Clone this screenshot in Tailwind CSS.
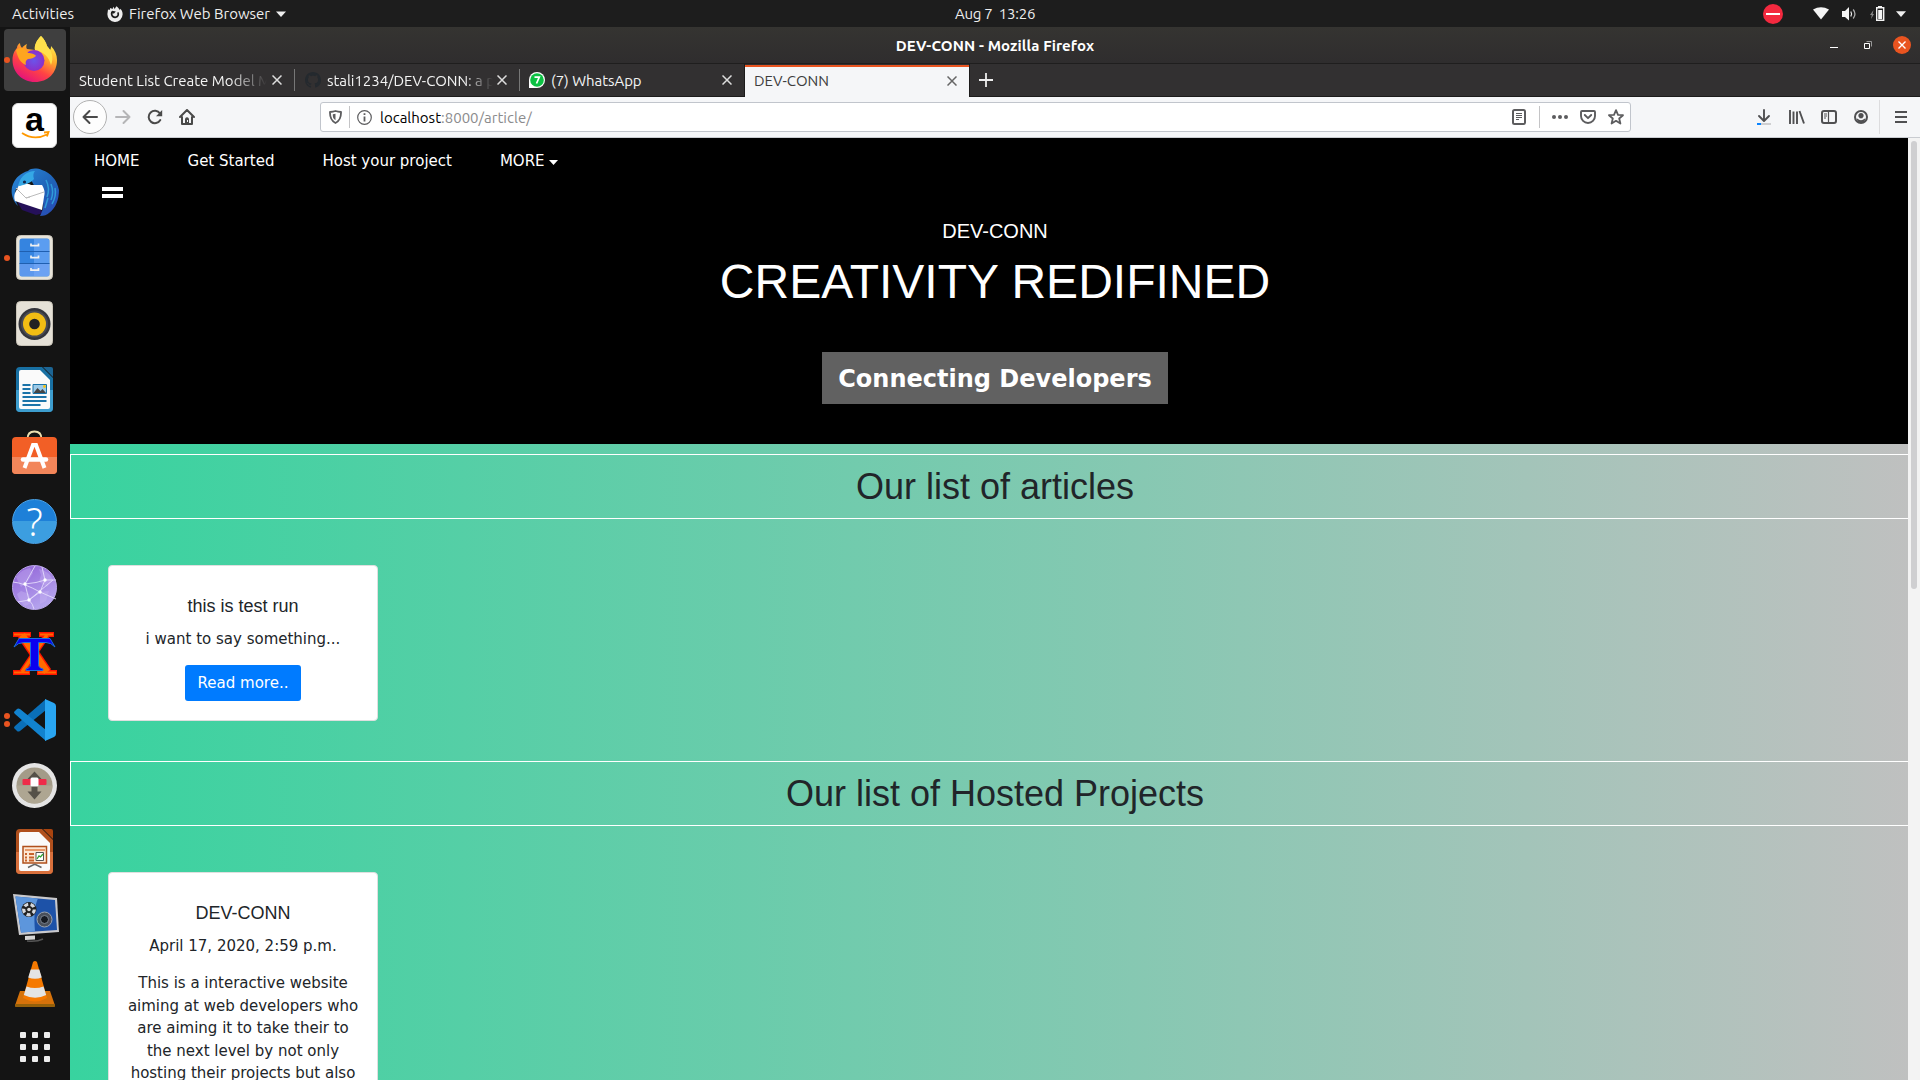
<!DOCTYPE html>
<html lang="en">
<head>
<meta charset="utf-8">
<title>DEV-CONN - Mozilla Firefox</title>
<script src="https://cdn.jsdelivr.net/npm/@tailwindcss/browser@4"></script>
</head>
<body class="w-[1920px] h-[1080px] overflow-hidden bg-[#141414] flex flex-col font-[Ubuntu,'Noto_Sans',sans-serif] text-[15px]">

<!-- System bar -->
<header class="h-[27px] shrink-0 bg-[#1d1d1d] text-[#eee] grid grid-cols-[1fr_auto_1fr] items-center leading-[27px] pl-[70px]">
  <div class="flex items-center -ml-[58px]">
    <span class="w-[62px] whitespace-nowrap tracking-[0.05px]">Activities</span>
    <svg class="ml-[33px] w-4 h-4" viewBox="0 0 16 16"><path fill="#eee" d="M8 3.2 6.2.8 5.6 3 3.3 2 2.6 4 1 3.400.4 8a7.600 7.600 0 0 0 15.200.6c.1-2.400-.8-4.800-2.400-5.800l-.3 1.500C12.300 2.800 11 1.500 9.600.3 8.600 1.400 8 2 8 3.200z"/><path fill="none" stroke="#1d1d1d" stroke-width="1.700" d="M5 5.600C3.800 9 5.500 11.400 8.200 11.300 11 11.200 12 8.600 10.800 6.300"/><path fill="#1d1d1d" d="M5 4.800l3.800.6-1.800 2-1.800.2z"/></svg>
    <span class="ml-1.5 whitespace-nowrap">Firefox Web Browser</span>
    <svg class="ml-1.5 w-[10px] h-[6px]" viewBox="0 0 10 6"><path fill="#eee" d="M0 .5h10L5 6z"/></svg>
  </div>
  <div class="whitespace-pre tracking-[-0.25px] mt-[-1px]">Aug 7  13:26</div>
  <div class="flex items-center justify-end pr-[14px]">
    <svg class="w-5 h-5 mr-[30px]" viewBox="0 0 20 20"><circle cx="10" cy="10" r="10" fill="#f3293f"/><path d="M3 10h14" stroke="#fff" stroke-width="2"/></svg>
    <svg class="w-4 h-[13px] mr-[13px]" viewBox="0 0 16 13"><path fill="#f4f4f4" d="M0 2.500Q8-2 16 2.500L8 12.500z"/></svg>
    <svg class="w-[15px] h-[14px] mr-[13px]" viewBox="0 0 15 14"><path fill="#f4f4f4" d="M0 4h3l4-4v13.500L3 10H0z"/><path fill="none" stroke="#f4f4f4" stroke-width="1.200" d="M8.800 4.500q1.600 2.500 0 5"/><path fill="none" stroke="#aaa" stroke-width="1.300" d="M11.200 2.500q3.500 4.500 0 9"/></svg>
    <svg class="w-[15px] h-[16px] mr-[11px]" viewBox="0 0 15 16"><path fill="#888" d="M3.500 4 0 9h1.800L1 13l3-5H2.600z"/><path fill="#f4f4f4" d="M8 0h4v2H8z"/><path fill="none" stroke="#f4f4f4" stroke-width="1.400" d="M6.700 1.700h7v12.600h-7z"/><path fill="#f4f4f4" d="M8.200 4h4v9h-4z"/></svg>
    <svg class="w-[10px] h-[6px]" viewBox="0 0 10 6"><path fill="#eee" d="M0 .3h10L5 6z"/></svg>
  </div>
</header>

<div class="flex grow min-h-0">

<!-- Dock -->
<aside class="w-[70px] shrink-0 bg-[#141414] flex flex-col">
  <div class="relative h-[66px] shrink-0 flex items-center justify-center">
    <div class="absolute left-1 top-[2px] w-[62px] h-[62px] rounded bg-[#3f3f3f]"></div>
    <div class="absolute left-1 top-[30px] w-1.5 h-1.5 rounded-full bg-[#e95420]"></div>
    <svg class="relative w-[46px] h-[46px] top-[-1px]" viewBox="0 0 46 46">
      <defs><linearGradient id="ff" x1=".8" y1=".1" x2=".3" y2="1"><stop offset="0" stop-color="#fff44f"/><stop offset=".35" stop-color="#ffa82b"/><stop offset=".65" stop-color="#ff4344"/><stop offset="1" stop-color="#e3107e"/></linearGradient><radialGradient id="fp"><stop offset="0" stop-color="#6a55ea"/><stop offset="1" stop-color="#8b2fc9"/></radialGradient></defs>
      <path fill="url(#ff)" d="M29 0c3 3 5 6 6 10l3 4c1-1 1-3 1-4 4 4 6 9 6 14 0 13-9 22-22 22S.5 36 .5 24C.5 18 3 14 5 12c0-2 1-4 3-5 0 2 1 4 2 5 1-2 3-3 5-4-1 2-1 4 0 5l8 1c-1-5 2-10 6-14z"/>
      <path fill="#ffe14c" d="M29 0c3 3 5 6 6 10 5 5 7 12 4 19-2-8-7-13-16-15-1-5 2-10 6-14z"/>
      <circle cx="22" cy="24.500" r="10.500" fill="url(#fp)"/>
      <path fill="#ffa51f" d="M4 14c5-4 9-2 12 3 3 0 7 1 8 3-2 2-5 3-8 3-2 1-3 3-2 6-5-2-8-6-10-15z"/>
    </svg>
  </div>
  <div class="h-[66px] shrink-0 flex items-center justify-center pb-px pr-px">
    <div class="w-[45px] h-[45px] rounded-md bg-white border border-[#ddd] relative text-center text-[34px] leading-[31px] font-bold text-black font-['Liberation_Sans',sans-serif]">a
      <svg class="absolute left-2 top-[27px] w-[29px] h-[9px]" viewBox="0 0 29 9"><path fill="none" stroke="#f90" stroke-width="1.800" d="M1 2q12 8 25 1.500M23 1.500l4.500-.5-1.500 4.500"/></svg>
    </div>
  </div>
  <div class="h-[66px] shrink-0 flex items-center justify-center">
    <svg class="w-12 h-12" viewBox="0 0 48 48">
      <defs><linearGradient id="tb" x1="0" y1="0" x2="1" y2="1"><stop offset="0" stop-color="#2b8ad9"/><stop offset=".55" stop-color="#1f63b8"/><stop offset="1" stop-color="#2a48b5"/></linearGradient></defs>
      <path fill="#251059" d="M3 28l8 14 14 5 8-2-16-14z"/>
      <path fill="url(#tb)" d="M17 3c3-3 9-3 14-1 9 3 15 10 17 20 0 9-3 18-10 23-2 2-5 3-9 3 2-4 4-8 3-14L19 10 5 21C3 26 4 32 7 38 1 32-1 23 2 16 5 9 10 5 17 3z"/>
      <path fill="#fff" d="M4 25 8 17c6-2 8-2 12 0l11 0c3 5 3 8 2 12l-2 13L4 33c-1-3-1-5 0-8z"/>
      <path fill="none" stroke="#bbb" d="M5 20l10 10 18-6M15 30l4-1"/>
      <path fill="#35a8e6" d="M8 15C10 8 16 3 24 3c-2 2-2 5-1 8-3 4-8 5-14 7-2 0-2-1-1-3z"/><circle cx="13.500" cy="14" r="1.600" fill="#14284f"/>
      <path stroke="#2f9bd8" stroke-width="1.500" fill="none" d="M35 12c3 6 3 12 1 17M40 16c2 5 2 11 0 16M44 20c1 5 0 11-3 16M37 30l-3 10"/>
    </svg>
  </div>
  <div class="relative h-[66px] shrink-0 flex items-center justify-center pb-px pr-px">
    <div class="absolute left-1 top-[30px] w-1.5 h-1.5 rounded-full bg-[#e95420]"></div>
    <svg class="w-[37px] h-[45px]" viewBox="0 0 37 45"><rect x=".5" y=".5" width="36" height="44" rx="4" fill="#e8e4da" stroke="#c9c4b8"/><rect x="3.500" y="3.500" width="30" height="38" rx="2.500" fill="#3584e0"/><path fill="#5b9df0" d="M18 4h15v37H18z"/><path fill="#78a5f5" opacity=".6" d="M4 29h29v12H4z"/><path stroke="#1f5fb0" d="M3.500 16.500h30M3.500 28.500h30"/><path stroke="#f0f0f0" stroke-width="1.700" fill="none" d="M15 8.500v2.200h7.500V8.500M15 20.500v2.200h7.500v-2.200M15 33v2.200h7.500V33"/></svg>
  </div>
  <div class="h-[66px] shrink-0 flex items-center justify-center pb-px pr-px">
    <svg class="w-[37px] h-[45px]" viewBox="0 0 37 45"><rect x=".5" y=".5" width="36" height="44" rx="4" fill="#e5e1d7" stroke="#c9c4b8"/><circle cx="18.500" cy="23" r="16" fill="#34353c"/><circle cx="18.500" cy="23" r="13.500" fill="#4a4b53"/><circle cx="18.500" cy="23" r="11.500" fill="#f2bd14"/><circle cx="18.500" cy="23" r="5.300" fill="#222"/></svg>
  </div>
  <div class="h-[66px] shrink-0 flex items-center justify-center pb-px pr-px">
    <svg class="w-[37px] h-[45px]" viewBox="0 0 37 45"><path fill="#1870a3" d="M4 0h22l11 11v30q0 4-4 4H4q-4 0-4-4V4q0-4 4-4z"/><path fill="#3d9dce" d="M0 23h37v18q0 4-4 4H4q-4 0-4-4z"/><path fill="#fafafa" d="M5 3h19l10 10v27q0 2-2 2H5q-2 0-2-2V5q0-2 2-2z"/><path fill="#1c6594" d="M27 0h8q2 0 2 2v8z"/><path stroke="#1b73a8" stroke-width="2" d="M6.500 18h8M6.500 22h8M6.500 26h8M6.500 30h24M6.500 34h24M6.500 38h18"/><path fill="#9ccae8" stroke="#1b73a8" d="M17 17.500h13.500v9H17z"/><path fill="#444" d="M17.500 26l4-5 3 3 2-2 3.500 4z"/><circle cx="28.500" cy="19.500" r="1.400" fill="#f5c211"/></svg>
  </div>
  <div class="h-[66px] shrink-0 flex items-center justify-center pb-[7px] pr-px">
    <svg class="w-[45px] h-[45px]" viewBox="0 0 45 45"><path fill="none" stroke="#eadfb0" stroke-width="1.800" d="M15.500 9C15.500 4 18 1.500 22.500 1.500S29.500 4 29.500 9"/><rect y="7" width="45" height="37" rx="4" fill="#f25f26"/><path fill="#f2865a" d="M0 27h45v13q0 4-4 4H4q-4 0-4-4z"/><path fill="none" stroke="#fff" stroke-width="4" d="M12.500 38 21 15h3l8.500 23"/><path stroke="#fff" stroke-width="4.500" stroke-linecap="round" d="M11 29.500h23"/></svg>
  </div>
  <div class="h-[66px] shrink-0 flex items-center justify-center pb-px pr-px">
    <div class="w-[45px] h-[45px] rounded-full bg-linear-to-b from-[#1e80d8] from-50% to-[#3c9ee0] to-50% border border-[#4aa3e8] flex items-center justify-center text-white text-[38px] leading-none font-['Noto_Sans',sans-serif] font-light pb-px">?</div>
  </div>
  <div class="h-[66px] shrink-0 flex items-center justify-center pb-px pr-px">
    <svg class="w-[45px] h-[45px]" viewBox="0 0 45 45"><defs><linearGradient id="gl" x2=".6" y2="1"><stop offset="0" stop-color="#8f5fd6"/><stop offset="1" stop-color="#b5a5ee"/></linearGradient></defs><circle cx="22.500" cy="22.500" r="22" fill="url(#gl)" stroke="#b9a5e8"/><path fill="#c7b5f2" opacity=".4" d="M4 12q6-8 14-9l3 5-5 8-7 6zM27 4q10 2 14 11l-6 7-8-5 2-7zM9 26l8 3 2 9-6 3q-6-5-8-12zM28 27l9-1-3 10-6 3z"/><path fill="none" stroke="#e3dafa" stroke-width=".9" d="M1 17q11 1 27 10l16 7M13 19 23 1M13 19l4 16 24-20M33 15l-5 12-11 8M33 15 30 2M17 35 6 37M13 19q12-1 20-4h11M22 44q-1-5-5-9"/><g fill="#fff"><circle cx="13" cy="19" r="1.700"/><circle cx="33" cy="15" r="1.700"/><circle cx="28" cy="27" r="1.700"/><circle cx="17" cy="35" r="1.700"/></g></svg>
  </div>
  <div class="h-[66px] shrink-0 flex items-center justify-center pb-px pr-px">
    <svg class="w-[45px] h-[45px]" viewBox="0 0 45 45"><g fill="none" stroke="#ff1500"><path stroke-width="10" d="M10 4l25 37"/><path stroke-width="6" d="M35 4 10 41"/><path stroke-width="5" d="M1 3.500h18M27 3.500h15M1 41.500h17M25 41.500h20"/></g><g fill="none" stroke="#ff6a00"><path stroke-width="7" d="M10 4l25 37"/><path stroke-width="3.500" d="M35 4 10 41"/><path stroke-width="2" d="M2 3.500h16M28 3.500h13M2 41.500h15M26 41.500h18"/></g><path fill="#0a00f0" stroke="#1a6fe0" d="M7 7.500h31l5 8.500q-4-4.500-9-4.500h-7.500v22q0 3.500 4.500 4.500v1.500H14V38q4.500-1 4.500-4.500v-22H12q-6 0-10 4.500z"/></svg>
  </div>
  <div class="relative h-[66px] shrink-0 flex items-center justify-center">
    <div class="absolute left-1 top-[26px] w-1.5 h-1.5 rounded-full bg-[#e95420]"></div>
    <div class="absolute left-1 top-[34px] w-1.5 h-1.5 rounded-full bg-[#e95420]"></div>
    <svg class="w-[42px] h-[42px]" viewBox="0 0 42 42"><path fill="#0a6fb8" d="M0 29l3 3q1 1 3 0L32 11V0L1 27q-1 1-1 2z"/><path fill="#1283cf" d="M0 13l3-3q1-1 3 0l26 21v11L1 15q-1-1-1-2z"/><path fill="#29a6f2" d="M31 0l9 4q2 1 2 3v28q0 2-2 3l-9 4V0z"/></svg>
  </div>
  <div class="h-[66px] shrink-0 flex items-center justify-center pb-px pr-px">
    <svg class="w-[45px] h-[45px]" viewBox="0 0 45 45"><circle cx="22.500" cy="22.500" r="22.500" fill="#e4e4e4"/><circle cx="22.500" cy="22.500" r="18" fill="#a39b88"/><path fill="#aea692" d="M4.500 22.500h36a18 18 0 0 1-36 0z"/><path fill="#555148" d="M22.500 8.500l7 7.500h-4v12.500h4l-7 8-7-8h4V16h-4z"/><rect x="10.500" y="16" width="24" height="6" rx="1" fill="#ee2b49"/><rect x="18.500" y="14.500" width="8" height="9" rx="1.500" fill="#fff"/></svg>
  </div>
  <div class="h-[66px] shrink-0 flex items-center justify-center pb-px pr-px">
    <svg class="w-[37px] h-[45px]" viewBox="0 0 37 45"><path fill="#b0501d" d="M4 0h22l11 11v30q0 4-4 4H4q-4 0-4-4V4q0-4 4-4z"/><path fill="#d8703c" d="M0 23h37v18q0 4-4 4H4q-4 0-4-4z"/><path fill="#fafafa" d="M5 3h18l11 11v26q0 2-2 2H5q-2 0-2-2V5q0-2 2-2z"/><path fill="#a9440f" d="M27 0h8q2 0 2 2v8z"/><path fill="#fde6d2" stroke="#b0501d" stroke-width="1.500" d="M7 17.500h23.500v16.500H7z"/><path stroke="#e08048" stroke-width="1.500" d="M9 21h20"/><path stroke="#c8622b" stroke-width="1.800" stroke-dasharray="2 2 5 30" d="M9 25h10M9 28.500h10M9 31.500h10"/><path fill="#fff" stroke="#555" d="M20 23.500h7.500v8H20z"/><path fill="none" stroke="#2fa32f" stroke-width="1.300" d="M21 30l2-3 1.500 1 2.500-3"/><path fill="none" stroke="#666" stroke-width="1.500" d="M12 38.500l6-3h1.500l6 3"/></svg>
  </div>
  <div class="h-[66px] shrink-0 flex items-center justify-center">
    <svg class="w-[46px] h-12 ml-0.5" viewBox="0 0 46 48"><path fill="#c9c9cc" d="M0 0l44 4 2 34-40 3z"/><path fill="#1d52a8" d="M2.500 2.500 42 6l2 30-36 2.500z"/><path fill="#5d96dc" d="M2.500 2.500 25 4.500q-5 10-3 33L8 38.500z"/><circle cx="16" cy="15.500" r="7.500" fill="#222"/><circle cx="16" cy="15.500" r="5.300" fill="none" stroke="#d5d8dd" stroke-width="3.200" stroke-dasharray="4 2.500"/><circle cx="16" cy="15.500" r="1.800" fill="#ddd"/><circle cx="31.500" cy="25.500" r="7.500" fill="#4a505b" stroke="#9aa3b0"/><circle cx="31.500" cy="25.500" r="4" fill="#161a22" stroke="#7c8592"/><path fill="#d4d4d4" d="M12 42l10-.5v4l-10 .5z"/><path fill="none" stroke="#555" stroke-width="1.500" d="M14 47q10 1 16-2"/></svg>
  </div>
  <div class="h-[66px] shrink-0 flex items-center justify-center">
    <svg class="w-10 h-[46px]" viewBox="0 0 40 46"><path fill="#d6720a" d="M5 30h30l5 14.500q0 1.500-2 1.500H2q-2 0-2-1.500z"/><path fill="#94600a" d="M.5 43h39l.5 2-1 1H1l-1-1z"/><path fill="#f57900" d="M18 1q2-2 4 0l10 36q-12 7-24 0z"/><path fill="#e4e4e4" d="M15.700 8.500h8.600l2.500 8q-6.800 2.500-13.600 0zM11.500 25.500q8.500 3 17 0l2.700 8.500q-11 5.500-22.400 0z"/></svg>
  </div>
  <div class="grow flex justify-center pt-[15px]">
    <div class="grid grid-cols-3 gap-1.5 h-fit">
      <i class="size-1.5 rounded-[1px] bg-[#eee]"></i><i class="size-1.5 rounded-[1px] bg-[#eee]"></i><i class="size-1.5 rounded-[1px] bg-[#eee]"></i>
      <i class="size-1.5 rounded-[1px] bg-[#eee]"></i><i class="size-1.5 rounded-[1px] bg-[#eee]"></i><i class="size-1.5 rounded-[1px] bg-[#eee]"></i>
      <i class="size-1.5 rounded-[1px] bg-[#eee]"></i><i class="size-1.5 rounded-[1px] bg-[#eee]"></i><i class="size-1.5 rounded-[1px] bg-[#eee]"></i>
    </div>
  </div>
</aside>

<!-- Browser window -->
<div class="grow min-w-0 flex flex-col">
  <div class="h-[37px] shrink-0 grid grid-cols-[1fr_auto_1fr] items-center bg-linear-to-b from-[#353431] to-[#2f2d2e] border-b border-[#1f1e1e] text-white">
    <span></span>
    <span class="font-bold tracking-[0.1px] mt-[2px]">DEV-CONN - Mozilla Firefox</span>
    <div class="flex items-center justify-end pr-[9px]">
      <div class="w-2 h-px bg-white mr-[26px] mt-[5px]"></div>
      <svg class="w-2 h-2 mr-[21px]" viewBox="0 0 8 8"><path fill="none" stroke="#fff" d="M.5 2.500h5v5h-5z"/><path fill="none" stroke="#999" d="M2.500.5h5v5"/></svg>
      <svg class="w-[18px] h-[18px]" viewBox="0 0 18 18"><circle cx="9" cy="9" r="9" fill="#e95420"/><path stroke="#fff" stroke-width="1.400" d="M5.500 5.500l7 7M12.500 5.500l-7 7"/></svg>
    </div>
  </div>

  <div class="h-[33px] shrink-0 flex bg-[#323031] border-b border-[#1c1b1b] text-[#f4f4f4] leading-[33px]">
    <div class="w-[225px] flex items-center pl-[9px] my-[5px] border-r border-[#777] whitespace-nowrap">
      <span class="w-[188px] overflow-hidden mask-r-from-80% mask-r-to-100%">Student List Create Model M</span>
      <svg class="ml-[5px] w-[10px] h-[10px] shrink-0" viewBox="0 0 10 10"><path stroke="#ddd" stroke-width="1.500" d="M.5.5l9 9M9.500.5l-9 9"/></svg>
    </div>
    <div class="w-[225px] flex items-center pl-[10px] my-[5px] border-r border-[#777] whitespace-nowrap">
      <svg class="w-4 h-4 shrink-0" viewBox="0 0 16 16"><path fill="#24292e" d="M8 0C3.580 0 0 3.580 0 8c0 3.540 2.290 6.530 5.470 7.590.4.070.550-.170.550-.380 0-.190-.010-.820-.010-1.490-2.010.370-2.530-.490-2.690-.940-.090-.230-.480-.940-.820-1.130-.280-.150-.680-.520-.010-.530.630-.010 1.080.580 1.230.820.720 1.210 1.870.870 2.330.660.070-.520.280-.870.510-1.070-1.780-.2-3.640-.890-3.640-3.950 0-.870.310-1.590.820-2.150-.080-.2-.360-1.020.080-2.120 0 0 .670-.210 2.200.820.640-.180 1.320-.270 2-.270s1.360.090 2 .270c1.530-1.040 2.200-.820 2.200-.820.440 1.100.160 1.920.080 2.120.510.560.820 1.270.820 2.150 0 3.070-1.870 3.750-3.650 3.950.290.250.540.730.540 1.480 0 1.070-.010 1.930-.010 2.200 0 .210.150.460.550.380A8.010 8.010 0 0 0 16 8c0-4.420-3.580-8-8-8z"/></svg>
      <span class="ml-1.5 w-[166px] overflow-hidden mask-r-from-82% mask-r-to-100% tracking-[-0.05px]">stali1234/DEV-CONN: a p</span>
      <svg class="ml-1 w-[10px] h-[10px] shrink-0" viewBox="0 0 10 10"><path stroke="#ddd" stroke-width="1.500" d="M.5.5l9 9M9.500.5l-9 9"/></svg>
    </div>
    <div class="w-[225px] flex items-center pl-[9px] pr-[12px] border-r border-[#1c1b1b] whitespace-nowrap">
      <svg class="w-4 h-4 shrink-0" viewBox="0 0 16 16"><path fill="#fff" d="M0 16V8a8 8 0 1 1 8 8z"/><circle cx="8" cy="8" r="6.800" fill="#0cc143"/><path fill="none" stroke="#fff" stroke-width="1.700" d="M5.500 5.200h4.800L7.500 11.500"/></svg>
      <span class="ml-1.5 tracking-[-0.05px]">(7) WhatsApp</span>
      <svg class="ml-auto w-[10px] h-[10px]" viewBox="0 0 10 10"><path stroke="#ddd" stroke-width="1.500" d="M.5.5l9 9M9.500.5l-9 9"/></svg>
    </div>
    <div class="w-[224px] flex items-center pl-[9px] pr-[12px] mt-px mb-[-1px] bg-[#f5f6f8] border-t-2 border-[#e95420] text-[#3d3d3d]">
      <span class="mt-[-3px]">DEV-CONN</span>
      <svg class="ml-auto mt-[-2px] w-[10px] h-[10px]" viewBox="0 0 10 10"><path stroke="#666" stroke-width="1.500" d="M.5.5l9 9M9.500.5l-9 9"/></svg>
    </div>
    <div class="flex items-center pl-[9px] border-l border-[#1c1b1b]">
      <svg class="w-[14px] h-[14px] mt-[-1px]" viewBox="0 0 14 14"><path stroke="#eee" stroke-width="1.800" d="M7 0v14M0 7h14"/></svg>
    </div>
  </div>

  <div class="h-[41px] shrink-0 flex items-center bg-[#f5f6f8] border-b border-[#c9ccd1] pl-[3px] pr-[3px]">
    <div class="w-[34px] h-[34px] rounded-full border border-[#b1b1b1] bg-[#fdfdfd] flex items-center justify-center"><svg class="w-4 h-4" viewBox="0 0 16 16"><path fill="none" stroke="#4a4a4a" stroke-width="2" stroke-linecap="round" stroke-linejoin="round" d="M15 8H1.500M7.500 2l-6 6 6 6"/></svg></div>
    <svg class="ml-2 w-4 h-4" viewBox="0 0 16 16"><path fill="none" stroke="#b5b5b7" stroke-width="2" stroke-linecap="round" stroke-linejoin="round" d="M1 8h13.500M8.500 2l6 6-6 6"/></svg>
    <svg class="ml-4 w-4 h-4" viewBox="0 0 16 16"><path fill="none" stroke="#4a4a4a" stroke-width="2" stroke-linecap="round" d="M13.300 11A6.200 6.200 0 1 1 13 4.500"/><path fill="#4a4a4a" d="M15.200 1v6.200H9z"/></svg>
    <svg class="ml-4 w-4 h-4" viewBox="0 0 16 16"><path fill="none" stroke="#4a4a4a" stroke-width="2" stroke-linecap="round" stroke-linejoin="round" d="M1 8l7-7 7 7M3 8v7h10V8"/><path fill="#4a4a4a" d="M6 9.500Q8 7 10 9.500V15H6z"/><path fill="#f5f6f8" d="M8 11h1v2H8z"/></svg>

    <div class="ml-[125px] w-[1311px] h-[30px] bg-white border border-[#c1c5cc] rounded-[3px] flex items-center leading-[30px]">
      <svg class="ml-2 w-[13px] h-[14px]" viewBox="0 0 13 14"><path fill="none" stroke="#5c5c5e" stroke-width="1.800" stroke-linejoin="round" d="M1 2Q4 1.800 6.500 1 9 1.800 12 2c.2 5-.5 8.500-5.500 11C1.500 10.500.8 7 1 2z"/><path fill="#5c5c5e" d="M6.500 3.800v6.500C4 8.800 3.700 7 3.800 4.300z"/></svg>
      <div class="ml-[7px] w-px h-[22px] bg-[#c4c4c6]"></div>
      <svg class="ml-[7px] w-[15px] h-[15px]" viewBox="0 0 15 15"><circle cx="7.500" cy="7.500" r="6.800" fill="none" stroke="#5c5c5e" stroke-width="1.200"/><path stroke="#5c5c5e" stroke-width="1.800" d="M7.500 6.500v5M7.500 3.300v1.800"/></svg>
      <span class="ml-2 mt-[2px] text-[#8b8b8d]"><span class="text-black">localhost</span>:8000/article/</span>
      <svg class="ml-auto w-[14px] h-4" viewBox="0 0 14 16"><rect x="1" y="1" width="12" height="14" rx="1.500" fill="none" stroke="#5c5c5e" stroke-width="2"/><path stroke="#5c5c5e" d="M4 4.500h6M4 6.500h6M4 8.500h6M4 10.500h3"/></svg>
      <div class="ml-[13px] w-px h-[22px] bg-[#c4c4c6]"></div>
      <svg class="ml-3 w-4 h-4" viewBox="0 0 16 16"><g fill="#5c5c5e"><circle cx="2" cy="8" r="2"/><circle cx="8" cy="8" r="2"/><circle cx="14" cy="8" r="2"/></g></svg>
      <svg class="ml-3 w-4 h-4" viewBox="0 0 16 16"><path fill="none" stroke="#5c5c5e" stroke-width="1.900" stroke-linejoin="round" d="M2 2h12q1 0 1 1v4a7 7 0 0 1-14 0V3q0-1 1-1z"/><path fill="none" stroke="#5c5c5e" stroke-width="1.900" stroke-linecap="round" stroke-linejoin="round" d="M4.800 6 8 9.200 11.200 6"/></svg>
      <svg class="ml-3 mr-[6px] w-4 h-4" viewBox="0 0 16 16"><path fill="none" stroke="#5c5c5e" stroke-width="1.800" stroke-linejoin="round" d="M8 1.200l2 4.600 5 .4-3.800 3.300L12.400 14.500 8 11.800l-4.400 2.700 1.200-5L1 6.200l5-.4z"/></svg>
    </div>

    <div class="ml-auto flex items-center">
      <svg class="w-[14px] h-4 mr-[18px]" viewBox="0 0 14 16"><path fill="none" stroke="#505052" stroke-width="1.900" stroke-linecap="round" stroke-linejoin="round" d="M7 1v10M2 7l5 5 5-5"/><path fill="#cfcfd1" d="M0 14h14v2H0z"/><path fill="#0a84ff" d="M0 14h4v2H0z"/></svg>
      <svg class="w-4 h-[14px] mr-4" viewBox="0 0 16 14"><path stroke="#505052" stroke-width="1.900" d="M1 0v14M4.500 1.500V14M8 1.500V14M10.500 1l4.500 12.500"/></svg>
      <svg class="w-4 h-[14px] mr-[17px]" viewBox="0 0 16 14"><rect x="1" y="1" width="14" height="12" rx="2" fill="none" stroke="#505052" stroke-width="2"/><path stroke="#505052" stroke-width="1.200" d="M7.500 1v12M3 4h3M3 6h3M3 8h2"/></svg>
      <svg class="w-[14px] h-[14px] mr-[11px]" viewBox="0 0 14 14"><circle cx="7" cy="7" r="6" fill="none" stroke="#505052" stroke-width="2"/><circle cx="7" cy="5.500" r="2.600" fill="#505052"/><path fill="#505052" d="M2.500 8.500h9L10 12H4z"/><path fill="none" stroke="#f5f6f8" stroke-width="1.200" d="M3.500 7.800q3.500 3.400 7 0"/></svg>
      <div class="w-px h-[34px] bg-[#dcdcde] mr-[15px]"></div>
      <svg class="w-3 h-3 mr-[10px]" viewBox="0 0 12 12"><path stroke="#505052" stroke-width="2" d="M0 1h12M0 6h12M0 11h12"/></svg>
    </div>
  </div>

  <!-- Page viewport -->
  <div class="grow min-h-0 relative">
    <main class="h-full overflow-hidden bg-linear-to-r/srgb from-[#38d39f] to-[silver] text-[#212529] font-['DejaVu_Sans',sans-serif] leading-[22.500px]">
      <section class="h-[306px] bg-black text-white text-center pt-3">
        <nav class="flex items-center pl-6 gap-12 whitespace-nowrap">
          <a>HOME</a><a>Get Started</a><a>Host your project</a>
          <a class="flex items-center">MORE<svg class="ml-1 mt-0.5 w-[9px] h-[5px]" viewBox="0 0 9 5"><path fill="#fff" d="M0 0h9L4.500 5z"/></svg></a>
        </nav>
        <div class="flex flex-col gap-[3px] ml-8 mt-[14px] w-[21px]"><i class="h-1 bg-white"></i><i class="h-1 bg-white"></i></div>
        <div class="font-['Liberation_Sans',sans-serif]">
          <h4 class="text-xl leading-[30px] mt-[18px]">DEV-CONN</h4>
          <h1 class="text-5xl leading-[57.600px] mt-[7px]">CREATIVITY REDIFINED</h1>
        </div>
        <div class="mt-[42px] inline-block bg-[#616161] px-4 pt-[9px] pb-[7px] text-2xl leading-9 font-bold">Connecting Developers</div>
      </section>

      <h2 class="mt-[10px] h-[65px] border border-white pt-[10px] text-center text-4xl leading-[43.200px] font-['Liberation_Sans',sans-serif]">Our list of articles</h2>
      <article class="ml-[38px] mt-[46px] w-[270px] h-[156px] bg-white border border-[#dfdfdf] rounded text-center pt-[30px]">
        <h5 class="text-lg leading-[21.600px] font-['Liberation_Sans',sans-serif]">this is test run</h5>
        <p class="mt-[10px]">i want to say something...</p>
        <a class="mt-[15px] inline-block h-9 rounded-[3px] bg-[#007bff] text-white px-[13px] leading-[36px]">Read more..</a>
      </article>

      <h2 class="mt-[40px] h-[65px] border border-white pt-[10px] text-center text-4xl leading-[43.200px] font-['Liberation_Sans',sans-serif]">Our list of Hosted Projects</h2>
      <article class="ml-[38px] mt-[46px] w-[270px] h-[400px] bg-white border border-[#dfdfdf] rounded text-center pt-[30px]">
        <h5 class="text-lg leading-[21.600px] font-['Liberation_Sans',sans-serif]">DEV-CONN</h5>
        <p class="mt-[10px]">April 17, 2020, 2:59 p.m.</p>
        <p class="mt-[15px] px-[18px]">This is a interactive website aiming at web developers who are aiming it to take their to the next level by not only hosting their projects but also</p>
      </article>
    </main>
    <!-- Overlay scrollbar -->
    <div class="absolute right-0 inset-y-0 w-3 bg-[#f3f3f3] pl-[3px] pt-[3px]"><div class="w-1.5 h-[448px] rounded-full bg-[#cfcfd1]"></div></div>
  </div>
</div>
</div>
</body>
</html>
